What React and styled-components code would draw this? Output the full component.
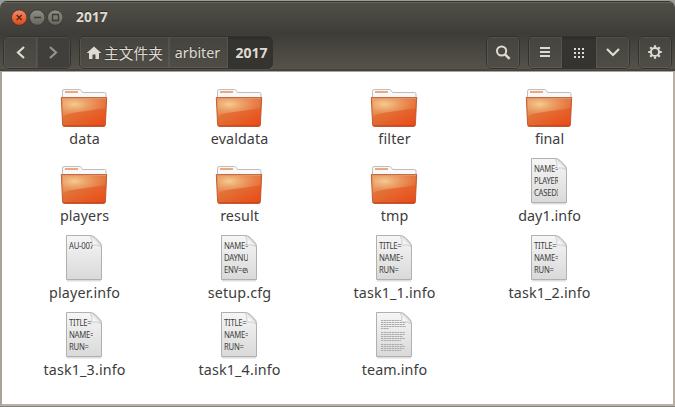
import React from 'react';
import styled, { createGlobalStyle } from 'styled-components';

const Global = createGlobalStyle`
  * { box-sizing: border-box; }
  html, body { margin: 0; height: 100%; overflow: hidden; }
  body { font-family: "Noto Sans", "Noto Sans CJK SC", sans-serif; background: #85817d; }
  svg { display: block; flex: none; }
`;
const Desktop = styled.div`
  width: 675px; height: 407px; padding-top: 1px;
  display: flex; flex-direction: column;
  background: linear-gradient(#9b9c97 0 12px, #85817d 12px);
`;
const Frame = styled.main`
  height: 405px; display: flex; flex-direction: column; overflow: hidden;
  border-radius: 7px 7px 0 0; background: #85817d;
`;
const TitleBar = styled.header`
  height: 32px; flex: none; display: flex; align-items: center; padding: 0 0 0 11px;
  border-top: 1px solid #35342f;
  box-shadow: inset 0 1px #65645a;
  background: linear-gradient(#504f47, #3e3d39);
`;
const Controls = styled.div`display: flex; gap: 2px; width: 65px;`;
const Title = styled.h1`
  margin: 0; padding-bottom: 2px; font-size: 13.8px; line-height: 20px; font-weight: 700; color: #dfdbd2;
  text-shadow: 0 -1px #2e2d2a;
`;
const ToolBar = styled.nav`
  height: 38px; flex: none; display: flex; padding: 3px 3px 0; 
  background: linear-gradient(#3d3c38, #55524a 94%, #45433d 95%);
`;
const Group = styled.div`
  height: 33px; display: flex; overflow: hidden; width: ${p => p.$w}px;
  margin-left: ${p => p.$push ? 'auto' : (p.$gap || 0) + 'px'};
  border: 1px solid #33322e; border-radius: 5px;
  box-shadow: 0 1px rgba(255,255,255,.08);
`;
const ToolButton = styled.button`
  appearance: none; border: 0; padding: 0 ${p => p.$nudge || 0}px 0 0; margin: 0; min-width: 0;
  width: ${p => p.$w}px; flex: none; display: flex; align-items: center; justify-content: center;
  font: ${p => p.$active ? 700 : 400} ${p => p.$size || 14}px "Noto Sans", "Noto Sans CJK SC", sans-serif;
  color: ${p => p.$dim ? '#96938b' : '#dfdbd2'};
  background: ${p => p.$active ? '#353430' : p.$dim ? '#403f3b' : 'linear-gradient(#45443f, #4f4d46)'};
  box-shadow: ${p => p.$active ? 'inset 0 2px 2px #2f2e2a' : 'inset 0 0 0 1px rgba(255,255,255,.07)'};
  text-shadow: 0 -1px #33322e;
`;
const Crumb = styled.span`padding: 0 0 1px ${p => p.$gap || 0}px; white-space: nowrap;`;
const Content = styled.section`
  height: 335px; flex: none; padding: 6px 0 0 5px;
  border: solid; border-width: 1px 2px 2px; border-color: #aaa49d #b5afa8 #b7b1aa #a9a39c;
  background: #fff;
  display: grid; grid-template-columns: repeat(4, 155px); grid-auto-rows: 77px; align-content: start;
`;
const Item = styled.figure`
  margin: 0; display: flex; flex-direction: column; align-items: center;
`;
const IconBox = styled.div`height: 50px; display: flex; align-items: flex-end; padding-right: 2px;`;
const Label = styled.figcaption`
  height: 22px; line-height: 22px; font-size: 14.3px; color: #3c3c3c; white-space: nowrap;
  letter-spacing: ${p => p.$ls || 0}px; margin-right: ${p => -(p.$ls || 0)}px;
`;

const WindowButton = ({ kind }) => (
  <svg width="16" height="17" viewBox="0 0 16 17">
    <defs>
      <linearGradient id={'wb-' + kind} x1="0" y1="0" x2="0" y2="1">
        <stop offset="0" stopColor={kind === 'close' ? '#f58a68' : '#918f85'} />
        <stop offset="1" stopColor={kind === 'close' ? '#dc4916' : '#66645d'} />
      </linearGradient>
    </defs>
    <circle cx="8.2" cy="8.6" r="7.7" fill={`url(#wb-${kind})`} stroke="#33322e" strokeWidth=".7" />
    <g fill="none" stroke={kind === 'close' ? '#5a2412' : '#3b3a36'} strokeWidth="1.3">
      {kind === 'close' && <path d="M5.7 6l5 5m0-5l-5 5" />}
      {kind === 'min' && <path d="M5 8.5h7" />}
      {kind === 'max' && <path d="M5.500 5.500h6v6h-6z" />}
    </g>
  </svg>
);
const Chevron = ({ dir }) => (
  <svg width="14" height="14" viewBox="0 0 14 14" fill="none" stroke="currentColor" strokeWidth="2.2">
    <path d={dir === 'left' ? 'M10 1L4 6.500l6 5.500' : dir === 'right' ? 'M4 1l6 5.500-6 5.500' : 'M1 3l6 6 6-6'} />
  </svg>
);
const Home = () => (
  <svg width="16" height="14" viewBox="0 0 16 14" fill="currentColor">
    <path d="M8 .5l7.300 6.500H13V13H9.500V8.500h-3V13H3V7H.7z" />
  </svg>
);
const Search = () => (
  <svg width="16" height="16" viewBox="0 0 16 16" fill="none" stroke="currentColor" strokeWidth="2">
    <circle cx="6.600" cy="6" r="4.600" /><path d="M10 9.400l4.600 4.400" strokeWidth="2.500" />
  </svg>
);
const ListIcon = () => (
  <svg width="10" height="11" viewBox="0 0 10 11" fill="currentColor">
    <path d="M0 0h10v2H0zM0 4h10v2H0zM0 8h10v2H0z" />
  </svg>
);
const Dots = () => (
  <svg width="10" height="12" viewBox="0 0 10 12" fill="currentColor">
    {[1, 5, 9].map(y => [0, 4, 8].map(x => <rect key={x + '-' + y} x={x} y={y} width="2" height="2" />))}
  </svg>
);
const Gear = () => (
  <svg width="14" height="15" viewBox="0 0 14 15" fill="none" stroke="currentColor">
    <circle cx="7" cy="7" r="4.100" strokeWidth="2" />
    {[0, 45, 90, 135, 180, 225, 270, 315].map(a => (
      <path key={a} d="M7 0.200v2.300" strokeWidth="2.200" transform={`rotate(${a} 7 7)`} />
    ))}
  </svg>
);

const Folder = () => (
  <svg width="48" height="40" viewBox="0 0 48 40">
    <path d="M2.500 11V3.200q0-1.700 1.700-1.700h15.300q1.200 0 1.800 1l1.200 2h22q1.500 0 1.500 1.500v5z" fill="#f8f8f8" stroke="#bdbdbd" />
    <rect x="5" y="3" width="13" height="2" fill="#eda67d" />
    <path d="M1.300 9.500h45.400l-1.300 27.200q-.1 1.800-1.800 1.800H4.400q-1.700 0-1.800-1.800z" fill="url(#folder-base)" stroke="#ba5428" strokeWidth=".9" />
    <path d="M2.300 10.500h43.500l-.5 9.800Q31 22.500 17 24.300T2.800 29.800z" fill="url(#folder-shine)" />
    <path d="M2 10.300h44" stroke="#e59a75" />
    <path d="M3.500 37.600h41" stroke="#bc3d14" strokeOpacity=".6" />
  </svg>
);
const Paper = ({ lines, dense }) => (
  <svg width="38" height="48" viewBox="0 0 38 48">
    <path d="M2 46.500h34" stroke="#ddd" strokeWidth="2" />
    <path d="M1.500 1.500H25q3 0 5.500 2.400l3.400 3.300q2.600 2.500 2.600 5.200v33.100h-35z" fill="url(#paper-fill)" stroke="#b0b0b0" />
    <svg x="0" y="0" width="28" height="48" overflow="hidden">
      {lines.map((t, i) => (
        <text key={i} transform={`translate(4 ${14.600 + i * 12}) scale(.83 1)`} fontFamily="Noto Sans, sans-serif" fontSize="9.300" letterSpacing="-.3" fill="#3c3c3c">{t}</text>
      ))}
    </svg>
    {dense && (
      <g stroke="#aaa" strokeWidth="1" strokeDasharray="2.200 .5">
        {[[9.5, 20], [11.5, 25], [13.5, 24], [15.5, 25], [17.5, 8], [21.5, 24], [23.5, 24], [25.5, 22], [27.5, 24], [29.5, 20], [33.5, 22], [35.5, 24], [37.5, 23], [39.5, 20]].map(([y, w]) => (
          <path key={y} d={`M6 ${y}h${w}`} />
        ))}
      </g>
    )}
    <path d="M25 1.200q2.800 4.300 2 9.800 4.800-1 9.300 1.700-.6-2.600-2.500-4.500L30 4.400Q27.900 1.900 25 1.200z" fill="url(#paper-fold)" stroke="#bcbcbc" strokeWidth=".7" />
  </svg>
);
const Gradients = () => (
  <svg width="0" height="0">
    <defs>
      <linearGradient id="folder-base" x1=".1" y1="0" x2=".9" y2="1">
        <stop offset="0" stopColor="#e08348" /><stop offset=".45" stopColor="#e26f35" /><stop offset="1" stopColor="#ea4a18" />
      </linearGradient>
      <radialGradient id="folder-shine" cx=".28" cy=".3" r=".85">
        <stop offset="0" stopColor="#f6d59b" stopOpacity=".9" /><stop offset="1" stopColor="#ea8450" stopOpacity=".2" />
      </radialGradient>
      <linearGradient id="paper-fill" x1="0" y1="0" x2="0" y2="1">
        <stop offset="0" stopColor="#f6f6f6" /><stop offset="1" stopColor="#d9d9d9" />
      </linearGradient>
      <linearGradient id="paper-fold" x1=".1" y1=".9" x2=".7" y2=".3">
        <stop offset="0" stopColor="#fff" /><stop offset=".5" stopColor="#f5f5f5" /><stop offset="1" stopColor="#cfcfcf" />
      </linearGradient>
    </defs>
  </svg>
);

const task = ['TITLE=', 'NAME=', 'RUN='];
const items = [
  { name: 'data', ls: .15 }, { name: 'evaldata', ls: .1 }, { name: 'filter', ls: .2 }, { name: 'final' },
  { name: 'players', ls: .1 }, { name: 'result', ls: .1 }, { name: 'tmp', ls: .2 },
  { name: 'day1.info', ls: .05, lines: ['NAME=', 'PLAYER', 'CASEDI'] },
  { name: 'player.info', ls: .15, lines: ['AU-007'] },
  { name: 'setup.cfg', ls: .15, lines: ['NAME=', 'DAYNU', 'ENV=ev'] },
  { name: 'task1_1.info', ls: .15, lines: task }, { name: 'task1_2.info', ls: .15, lines: task },
  { name: 'task1_3.info', ls: .15, lines: task }, { name: 'task1_4.info', ls: .15, lines: task },
  { name: 'team.info', ls: .1, lines: [], dense: true },
];

export default function App() {
  return (
    <>
      <Global />
      <Desktop>
        <Frame>
          <TitleBar>
            <Controls>
              <WindowButton kind="close" /><WindowButton kind="min" /><WindowButton kind="max" />
            </Controls>
            <Title>2017</Title>
          </TitleBar>
          <ToolBar>
            <Group $w={68}>
              <ToolButton $w={33} aria-label="Back"><Chevron dir="left" /></ToolButton>
              <ToolButton $w={33} $dim $nudge={2} aria-label="Forward"><Chevron dir="right" /></ToolButton>
            </Group>
            <Group $w={194} $gap={8}>
              <ToolButton $w={89} $size={14.7}><Home /><Crumb $gap={2}>主文件夹</Crumb></ToolButton>
              <ToolButton $w={59} $size={14.3} $nudge={2}><Crumb>arbiter</Crumb></ToolButton>
              <ToolButton $w={44} $size={14} $active><Crumb $gap={3}>2017</Crumb></ToolButton>
            </Group>
            <Group $w={34} $push>
              <ToolButton $w={32} aria-label="Search"><Search /></ToolButton>
            </Group>
            <Group $w={102} $gap={8}>
              <ToolButton $w={33} $nudge={2} aria-label="List view"><ListIcon /></ToolButton>
              <ToolButton $w={34} $active aria-label="Grid view"><Dots /></ToolButton>
              <ToolButton $w={33} aria-label="View options"><Chevron dir="down" /></ToolButton>
            </Group>
            <Group $w={34} $gap={8}>
              <ToolButton $w={32} aria-label="Settings"><Gear /></ToolButton>
            </Group>
          </ToolBar>
          <Content>
            {items.map(it => (
              <Item key={it.name}>
                <IconBox>{it.lines ? <Paper lines={it.lines} dense={it.dense} /> : <Folder />}</IconBox>
                <Label $ls={it.ls}>{it.name}</Label>
              </Item>
            ))}
          </Content>
        </Frame>
      </Desktop>
      <Gradients />
    </>
  );
}
